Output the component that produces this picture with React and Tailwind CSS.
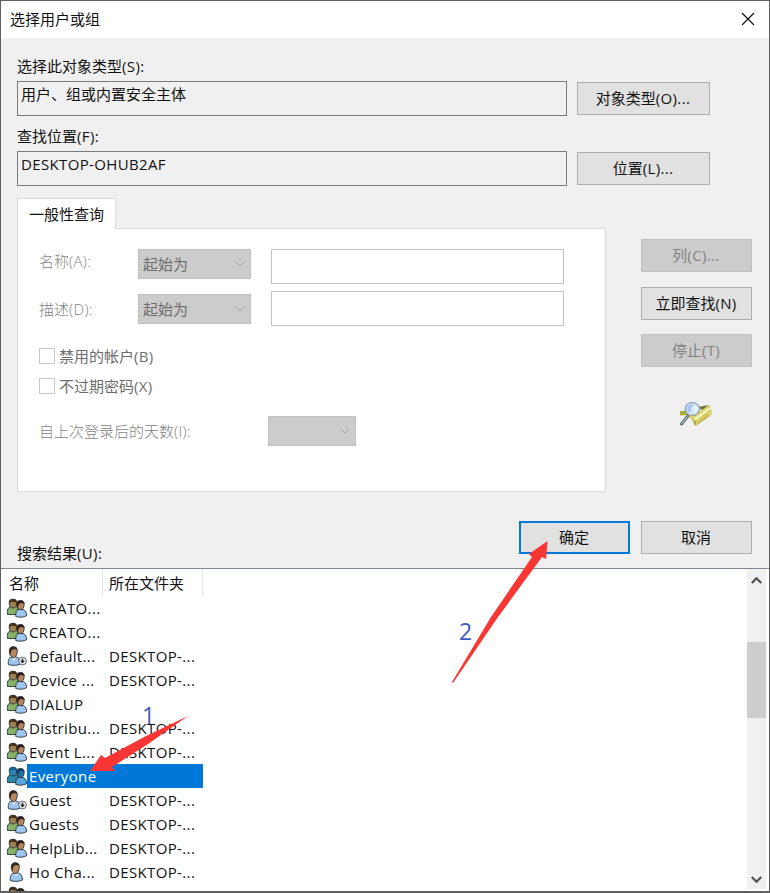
import React, { useState } from 'react';

const results = [
  { name: 'CREATO...', folder: '', icon: 'group' },
  { name: 'CREATO...', folder: '', icon: 'group' },
  { name: 'Default...', folder: 'DESKTOP-...', icon: 'disabled' },
  { name: 'Device ...', folder: 'DESKTOP-...', icon: 'group' },
  { name: 'DIALUP', folder: '', icon: 'group' },
  { name: 'Distribu...', folder: 'DESKTOP-...', icon: 'group' },
  { name: 'Event L...', folder: 'DESKTOP-...', icon: 'group' },
  { name: 'Everyone', folder: '', icon: 'group' },
  { name: 'Guest', folder: 'DESKTOP-...', icon: 'disabled' },
  { name: 'Guests', folder: 'DESKTOP-...', icon: 'group' },
  { name: 'HelpLib...', folder: 'DESKTOP-...', icon: 'group' },
  { name: 'Ho Cha...', folder: 'DESKTOP-...', icon: 'user' },
  { name: '', folder: '', icon: 'group' }
];

// La tecla de acceso "(X)" va un poco más espaciada que el texto chino
const Text = ({ children }) => {
  const start = children.indexOf('(');
  return (
    <span className="whitespace-nowrap">
      {children.slice(0, start)}
      <span className="tracking-[0.36px]">{children.slice(start)}</span>
    </span>
  );
};

const Chevron = ({ up, className }) => (
  <svg viewBox="0 0 10 6" className={className} fill="none" stroke="currentColor">
    <path d={up ? 'M0.7 5.3 5 1l4.3 4.3' : 'M0.7 0.7 5 5l4.3-4.3'} />
  </svg>
);

const GroupIcon = ({ selected }) => (
  <svg viewBox="0 0 21 20" className="w-[21px] h-5 shrink-0" stroke="#26303a" strokeWidth="0.9">
    <path d="M1.500 16.500c-.5-4.500.500-7.500 3.500-8h5c2 1 2.500 3 2.500 8Z" fill={selected ? '#2c86a8' : '#86b268'} />
    <path d="M3.300 5C3 2.500 4.200 1.200 7 1.200s4 1.300 3.900 3.800c-.1 3-1.600 5-3.900 5S3.500 8 3.300 5Z" fill={selected ? '#2b83b5' : '#a08050'} />
    <path d="M3.300 6C3 2.500 4.200 1.200 7 1.200s4 1.300 3.700 3.200C8 4 6.300 3.300 5 3.800Z" fill={selected ? '#195f80' : '#3d2d1c'} stroke="none" />
    <path d="M9.800 18.500c-.5-4 .7-6.600 3.200-7.200h4c2.800 1.200 3.600 3.700 3.500 6.500-2.500 1.700-8 1.700-10.700.7Z" fill={selected ? '#5aa5e0' : '#9fc6ee'} />
    <path d="M10.800 6.500c-.2-2.600 1.200-4 3.700-4s3.900 1.400 3.700 4c-.2 3.200-1.600 5.200-3.700 5.200s-3.500-2-3.700-5.200Z" fill={selected ? '#2472aa' : '#b98659'} />
    <path d="M10.800 7.500c-.5-3.500 1-5 3.700-5s4 1.400 3.700 3.200c-2-.9-3.600-.8-4.700 0-1 .700-1.300 2-1.500 4Z" fill={selected ? '#123f63' : '#2c211b'} stroke="none" />
  </svg>
);

const UserIcon = ({ disabled }) => (
  <svg viewBox="0 0 21 20" className="w-[21px] h-5 shrink-0" stroke="#26303a" strokeWidth="0.9">
    <g transform={disabled ? undefined : 'translate(2 0)'}>
      <path d="M2.300 18.500c-.5-4.500 1-7 3.700-7.500h4.500c3 1 4 4 4 7-3 1.700-9.200 1.700-12.200.5Z" fill="#9fc6ee" />
      <path d="M6 11.500 8 15l2-3.500Z" fill="#e6f0fa" stroke="none" />
      <path d="M3.400 5.500C3.200 2.300 4.600.700 7.300.700s4.300 1.600 4 4.800c-.3 3.600-1.900 6.200-4 6.200s-3.600-2.600-3.900-6.200Z" fill="#b98a62" />
      <path d="M3.400 6.500C2.800 2.500 4.600.700 7.300.700s4.300 1.200 3.900 3C8.500 3 6.500 3.200 5.600 4.500c-.7 1-.6 2.500-.8 4Z" fill="#33261e" stroke="none" />
    </g>
    {disabled && (
      <>
        <circle cx="16.500" cy="15" r="3.900" fill="#eef1f7" stroke="#555" />
        <path d="M16.500 12.800v2.400" stroke="#222" strokeWidth="1.600" />
        <path d="M14 14.800h5l-2.500 2.700Z" fill="#222" stroke="none" />
      </>
    )}
  </svg>
);

const SearchIcon = () => (
  <svg viewBox="0 0 34 26" className="w-[34px] h-[26px]">
    <path d="M1 10h8l4 4 8-4 10-6 1 10-16 10-3-5-5-5-7 1Z" fill="#d8d06a" />
    <path d="M1 10h8v4H1Z" fill="#a9ad35" />
    <path d="m19 6 11-2-7 5Z" fill="#77743a" />
    <path d="m14 18 15-11 3 1-15 12Z" fill="#f5f1b4" />
    <path d="m14 18 3 2v4.500l-2-1Z" fill="#b5ae42" />
    <path d="m17 20 15-11v5L17 24.500Z" fill="#e8df70" stroke="#a49c3d" strokeWidth="0.500" />
    <path d="m19 20.500.5 2 1.500-3.500.5 2 1.500-3.500.5 2L25 16l.5 2 1.500-3.500.5 2L29 13l.5 1.500" fill="none" stroke="#aaa246" strokeWidth="0.700" />
    <path d="m8.500 15.500-6 7.500" stroke="#56686b" strokeWidth="3" strokeLinecap="round" />
    <path d="m8.500 15.500-6 7.500" stroke="#bcc9cb" strokeWidth="1.200" />
    <ellipse cx="13.300" cy="8" rx="7.200" ry="6.500" fill="#d3e7fb" stroke="#8c9baa" strokeWidth="1.200" />
    <path d="M7.500 8c.5-3.500 4-5.800 8.500-4.500-3 1-4.500 3.500-4.500 8-2-.2-3.500-1.500-4-3.500Z" fill="#a9c4f3" />
    <path d="M14 4c3 0 4.500 1.500 5 4l-4 4.500c.8-3 .5-5.500-1-8.500Z" fill="#effaff" />
  </svg>
);

const Button = ({ children, className = 'w-[111px]', disabled, primary }) => (
  <button
    disabled={disabled}
    className={`h-[33px] shrink-0 flex items-center justify-center pb-[2px] pr-px ${className} ${
      disabled
        ? 'bg-[#cccccc] border border-[#bfbfbf] text-[#838383]'
        : primary
          ? 'bg-[#e1e1e1] border-2 border-[#0078d7]'
          : 'bg-[#e1e1e1] border border-[#adadad]'
    }`}
  >
    {children}
  </button>
);

const Select = ({ children, className = 'w-[113px]' }) => (
  <div className={`h-[30px] flex items-center justify-between bg-[#cccccc] border border-[#bfbfbf] pl-1 pr-[5px] text-[#6d6d6d] ${className}`}>
    <span>{children}</span>
    <Chevron className="w-[10px] h-[6px] text-[#9b9b9b]" />
  </div>
);

const ReadOnlyField = ({ label, value, button }) => (
  <div className="h-[70px]">
    <div className="h-7 flex items-center pb-[2px]">
      <Text>{label}</Text>
    </div>
    <div className="flex gap-[10px]">
      <div className="w-[550px] h-[35px] border border-[#7a7a7a] px-[3px] pt-px leading-[22px]">{value}</div>
      <Button className="w-[133px] mt-px">
        <Text>{button}</Text>
      </Button>
    </div>
  </div>
);

const QueryRow = ({ label, labelClass, selectClass }) => (
  <div className="flex h-[35px]">
    <div className={`w-[99px] flex items-center text-[#838383] font-light ${labelClass}`}>
      <Text>{label}</Text>
    </div>
    <div className={`w-[133px] ${selectClass}`}>
      <Select>起始为</Select>
    </div>
    <input disabled className="w-[293px] h-[35px] bg-white border border-[#c3c3c3]" />
  </div>
);

const Checkbox = ({ label }) => (
  <div className="h-[30px] flex items-center gap-1 text-[#6d6d6d]">
    <span className="w-4 h-4 bg-white border border-[#c8c8c8]" />
    <Text>{label}</Text>
  </div>
);

const ResultList = () => {
  const [selected, setSelected] = useState(7);

  return (
    <div className="flex-1 min-h-0 flex bg-white border-t border-[#828790]">
      <div className="flex-1 overflow-hidden">
        <div className="h-[27px] flex items-center">
          <div className="w-[102px] h-full flex items-center pl-2 border-r border-[#e5e5e5]">名称</div>
          <div className="w-[100px] h-full flex items-center pl-[6px] border-r border-[#e5e5e5]">所在文件夹</div>
        </div>
        {results.map((item, index) => (
          <div key={index} className="h-6 flex items-center pl-[5px] tracking-[0.36px]" onClick={() => setSelected(index)}>
            {item.icon === 'group' ? (
              <GroupIcon selected={selected === index} />
            ) : (
              <UserIcon disabled={item.icon === 'disabled'} />
            )}
            <div className={`w-[176px] h-6 flex items-center pl-[2px] ${selected === index ? 'bg-[#0078d7] text-white' : ''}`}>
              <span className="w-20 whitespace-pre">{item.name}</span>
              <span>{item.folder}</span>
            </div>
          </div>
        ))}
      </div>

      <div className="w-[19px] mr-[3px] mb-[2px] bg-[#f0f0f0] flex flex-col items-center pt-2 pb-[6px] text-[#505050]">
        <Chevron up className="w-[11px] h-[7px] stroke-2" />
        <div className="w-full h-[76px] mt-[58px] bg-[#cdcdcd]" />
        <Chevron className="w-[11px] h-[7px] mt-auto stroke-2" />
      </div>
    </div>
  );
};

// Flechas y números sobre el diálogo
const Annotations = () => (
  <div className="absolute inset-0 pointer-events-none text-[#4358c4] text-[23px] leading-[26px]">
    <span className="absolute left-[141px] top-[701px]">1</span>
    <span className="absolute left-[458px] top-[617px]">2</span>
    <svg viewBox="0 0 768 890" className="absolute inset-0 w-full h-full" fill="#f93634">
      <path d="M187 715 145 735 104 757 100 754 89 770 114 770 111 766 147 743Z" />
      <path d="M451 681 490 616 531 556 528 553 546.500 540 545 558 541 556 497 616 452 682Z" />
    </svg>
  </div>
);

const App = () => {
  return (
    <div className="relative w-[770px] h-[893px] flex flex-col overflow-hidden bg-[#f0f0f0] border border-b-2 border-[#606062] text-[15px] leading-5 text-[#111] font-['Open_Sans','Noto_Sans_CJK_SC',sans-serif]">
      <div className="h-[37px] shrink-0 flex items-center justify-between bg-white pl-[9px] pr-[14px] pb-[2px]">
        <span>选择用户或组</span>
        <svg viewBox="0 0 14 14" className="w-[14px] h-[14px]" stroke="#111" strokeWidth="1.2">
          <path d="M1 1l12 12M13 1 1 13" />
        </svg>
      </div>

      <div className="h-[530px] shrink-0 pl-4 pr-[17px] pt-[15px] flex flex-col">
        <ReadOnlyField label="选择此对象类型(S):" value="用户、组或内置安全主体" button="对象类型(O)..." />
        <ReadOnlyField
          label="查找位置(F):"
          value={<span className="tracking-[0.36px]">DESKTOP-OHUB2AF</span>}
          button="位置(L)..."
        />

        <div className="flex justify-between mt-[5px]">
          <div className="w-[589px]">
            <div className="relative w-[99px] h-[31px] -mb-px bg-white border border-b-0 border-[#d9d9d9] flex items-center justify-center">
              一般性查询
            </div>
            <div className="h-[264px] bg-white border border-[#d9d9d9] pl-[21px] pt-5">
              <QueryRow label="名称(A):" labelClass="h-6" />
              <div className="mt-[7px]">
                <QueryRow label="描述(D):" labelClass="h-9" selectClass="pt-[3px]" />
              </div>
              <div className="mt-[15px]">
                <Checkbox label="禁用的帐户(B)" />
                <Checkbox label="不过期密码(X)" />
              </div>
              <div className="mt-[15px] flex items-center">
                <span className="w-[229px] text-[#838383] font-light">
                  <Text>自上次登录后的天数(I):</Text>
                </span>
                <Select className="w-[88px]" />
              </div>
            </div>
          </div>

          <div className="pt-[41px] flex flex-col items-center">
            <Button disabled>
              <Text>列(C)...</Text>
            </Button>
            <Button className="w-[111px] mt-[15px]">
              <Text>立即查找(N)</Text>
            </Button>
            <Button disabled className="w-[111px] mt-[14px]">
              <Text>停止(T)</Text>
            </Button>
            <div className="mt-[34px] mr-[1px]">
              <SearchIcon />
            </div>
          </div>
        </div>

        <div className="flex mt-[29px]">
          <div className="w-[502px] pt-[22px]">
            <Text>搜索结果(U):</Text>
          </div>
          <Button primary>确定</Button>
          <Button className="w-[111px] ml-[11px]">取消</Button>
        </div>
      </div>

      <ResultList />
      <Annotations />
    </div>
  );
};

export default App;
